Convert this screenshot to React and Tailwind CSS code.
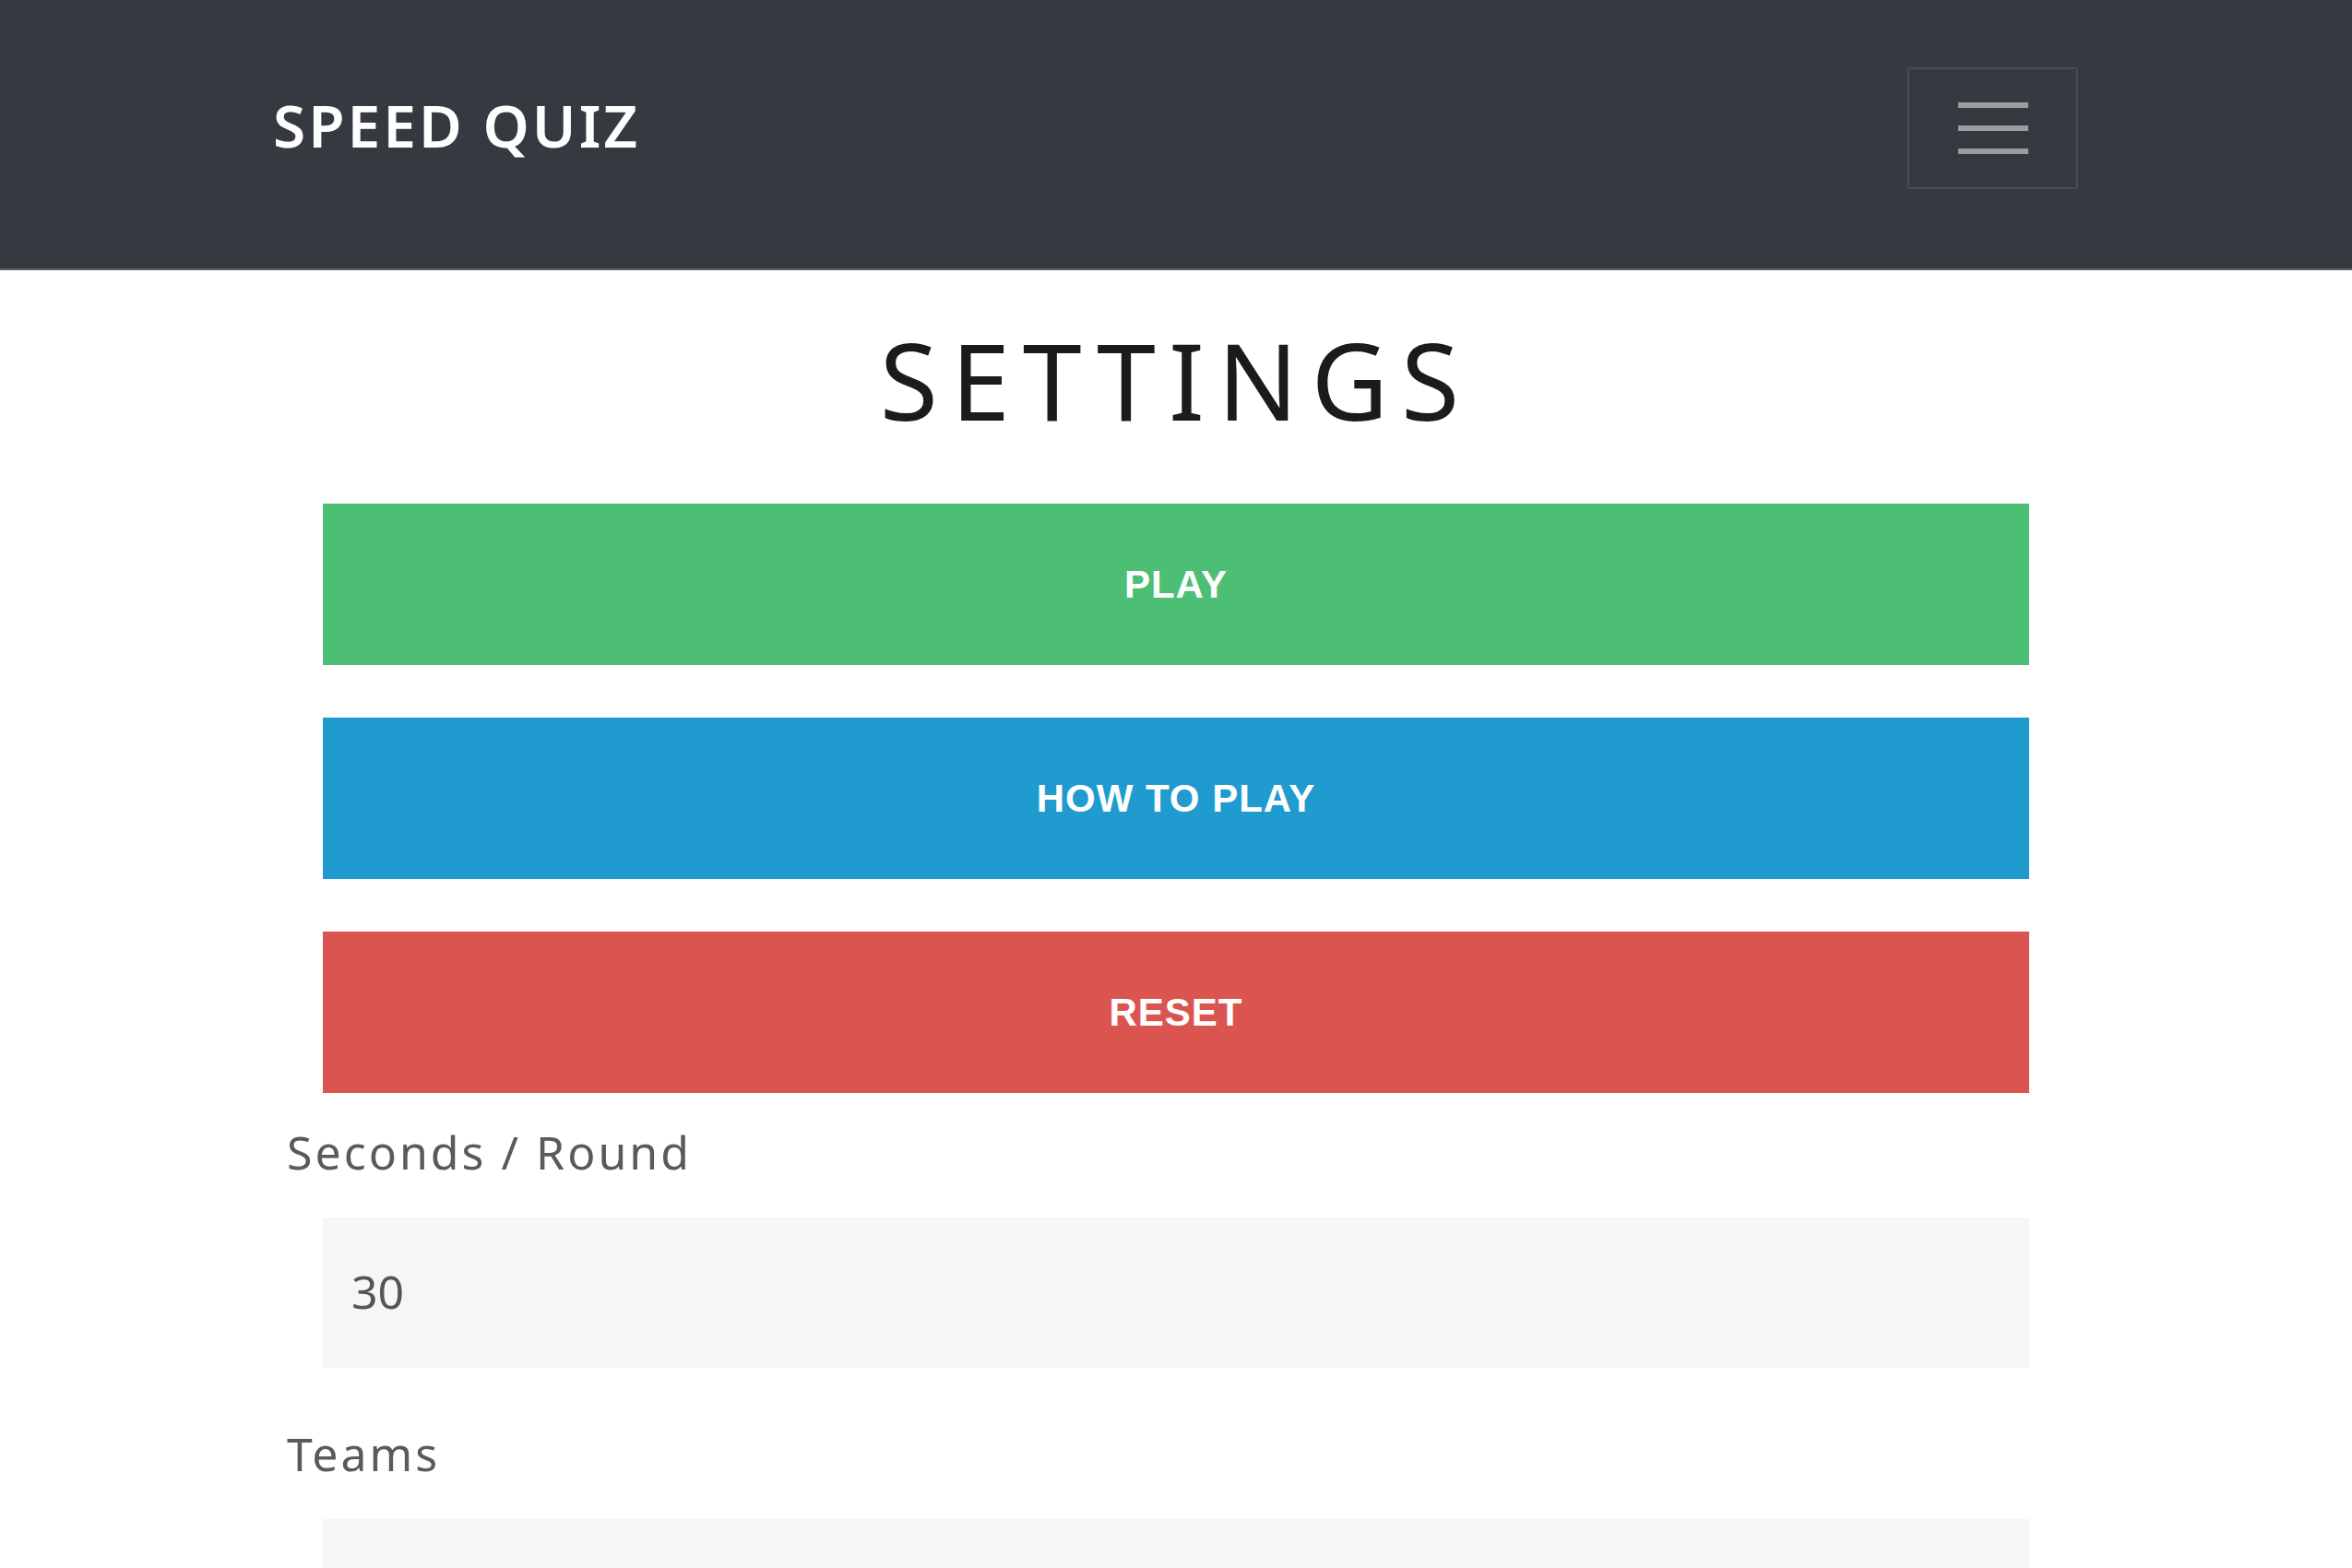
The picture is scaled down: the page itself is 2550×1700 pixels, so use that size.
import React, { useState } from "react";

const buttons = [
  { label: "PLAY", cls: "bg-[#4cbf74]" },
  { label: "HOW TO PLAY", cls: "bg-[#209bcf]" },
  { label: "RESET", cls: "bg-[#db5550]" },
];

export default function App() {
  const [seconds, setSeconds] = useState("30");
  const [teams, setTeams] = useState("");

  return (
    <div className="min-h-[1700px] bg-white font-['Noto_Sans',sans-serif]">
      {/* Navbar */}
      <nav className="h-[293px] bg-[#343a40] border-b-2 border-[#5c6066] flex items-center justify-between pl-[296px] pr-[297px] pb-[20px]">
        <div className="text-white text-[64px] leading-none font-semibold tracking-[3px]">SPEED QUIZ</div>
        <button className="w-[185px] h-[132px] mt-[6px] border-2 border-[#484d54] rounded-[3px] flex flex-col items-center justify-center gap-[19px]">
          <span className="block w-[76px] h-[6px] bg-[#9a9c9f]" />
          <span className="block w-[76px] h-[6px] bg-[#9a9c9f]" />
          <span className="block w-[76px] h-[6px] bg-[#9a9c9f]" />
        </button>
      </nav>

      <div className="w-[1928px] mx-auto">
        <h1 className="mt-[61px] text-center text-[115px] leading-[115px] tracking-[14px] text-[#1b1b1b]">SETTINGS</h1>

        <div className="mt-[77px] mx-[39px] flex flex-col gap-[57px]">
          {buttons.map((b) => (
            <button
              key={b.label}
              className={`${b.cls} h-[175px] w-full text-white text-[42px] font-bold tracking-[1px] font-['Liberation_Sans',sans-serif]`}
            >
              {b.label}
            </button>
          ))}
        </div>

        <label className="block mt-[39px] text-[50px] leading-[50px] tracking-[3px] text-[#5a5a5a]">Seconds / Round</label>
        <input
          value={seconds}
          onChange={(e) => setSeconds(e.target.value)}
          className="block mt-[46px] mx-[39px] w-[1850px] h-[163px] bg-[#f6f6f8] pl-[31px] pb-[4px] text-[50px] text-[#555] outline-none"
        />

        <label className="block mt-[68px] text-[50px] leading-[50px] tracking-[3px] text-[#5a5a5a]">Teams</label>
        <input
          value={teams}
          onChange={(e) => setTeams(e.target.value)}
          className="block mt-[46px] mx-[39px] w-[1850px] h-[163px] bg-[#f6f6f8] pl-[31px] text-[50px] text-[#555] outline-none"
        />
      </div>
    </div>
  );
}
